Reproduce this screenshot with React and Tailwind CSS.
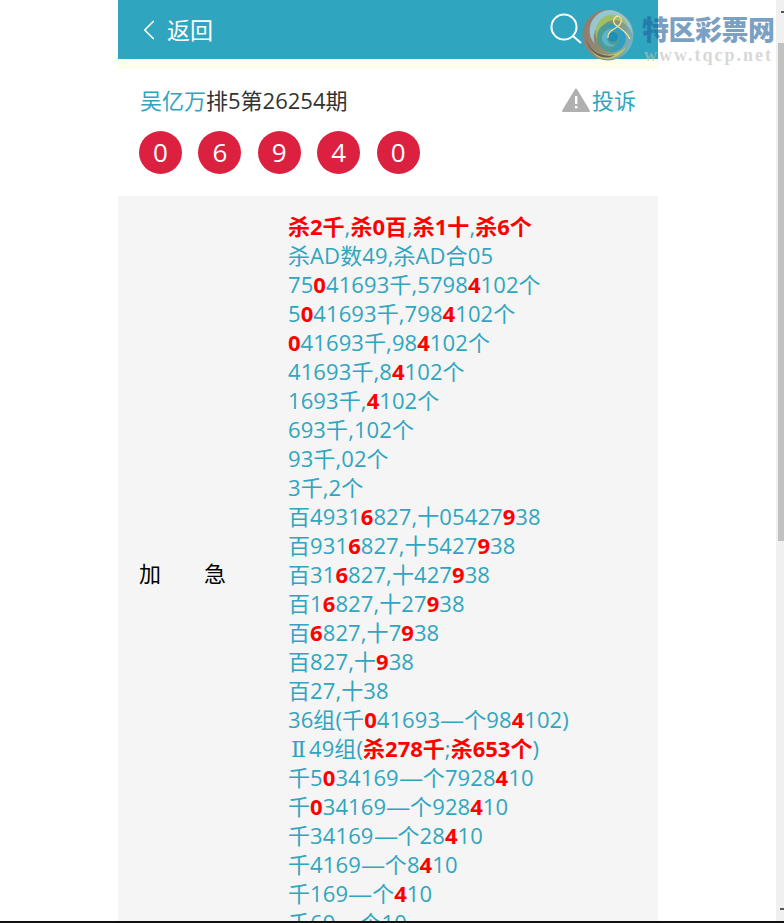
import { ChevronLeft } from 'lucide-react';

const R = ({ children }) => <b className="font-bold tracking-normal text-[#ff0000]">{children}</b>;
// The long dash in the reference runs a little wider than the font's own
const D = () => <span className="inline-block w-[24px] origin-left scale-x-[1.1]">—</span>;
const Two = () => <span className="inline-block w-[21px] text-center font-['DejaVu_Serif',serif]">Ⅱ</span>;

// Each row of the forecast text
const lines = [
  <><R>杀2千</R>,<R>杀0百</R>,<R>杀1十</R>,<R>杀6个</R></>,
  <>杀AD数49,杀AD合05</>,
  <>75<R>0</R>41693千,5798<R>4</R>102个</>,
  <>5<R>0</R>41693千,798<R>4</R>102个</>,
  <><R>0</R>41693千,98<R>4</R>102个</>,
  <>41693千,8<R>4</R>102个</>,
  <>1693千,<R>4</R>102个</>,
  <>693千,102个</>,
  <>93千,02个</>,
  <>3千,2个</>,
  <>百4931<R>6</R>827,十05427<R>9</R>38</>,
  <>百931<R>6</R>827,十5427<R>9</R>38</>,
  <>百31<R>6</R>827,十427<R>9</R>38</>,
  <>百1<R>6</R>827,十27<R>9</R>38</>,
  <>百<R>6</R>827,十7<R>9</R>38</>,
  <>百827,十<R>9</R>38</>,
  <>百27,十38</>,
  <>36组(千<R>0</R>41693<D />个98<R>4</R>102)</>,
  <><Two />49组(<R>杀278千</R>;<R>杀653个</R>)</>,
  <>千5<R>0</R>34169<D />个7928<R>4</R>10</>,
  <>千<R>0</R>34169<D />个928<R>4</R>10</>,
  <>千34169<D />个28<R>4</R>10</>,
  <>千4169<D />个8<R>4</R>10</>,
  <>千169<D />个<R>4</R>10</>,
  <>千69<D />个10</>,
];

const balls = ['0', '6', '9', '4', '0'];

function Logo() {
  return (
    <svg width="52" height="52" viewBox="0 0 52 52" className="block">
      <defs>
        <linearGradient id="logoBase" x1="0" y1="0.3" x2="1" y2="0.7">
          <stop offset="0" stopColor="#94796c" />
          <stop offset="0.55" stopColor="#8d8f72" />
          <stop offset="1" stopColor="#6fb7c8" />
        </linearGradient>
      </defs>
      <circle cx="26" cy="26" r="25.5" fill="url(#logoBase)" />
      <path d="M28 1C40 2 50 12 51 26C46 14 36 9 27 11C16 13 9 24 13 35C6 28 6 16 12 9C16 4 22 1 28 1Z" fill="#97c6d2" />
      <path d="M22 8C31 3 42 7 46 17C38 10 30 10 24 14C17 18 14 27 17 34C11 26 13 13 22 8Z" fill="#9dbf68" />
      <path d="M7 36C15 47 31 50 44 38C38 49 26 53 16 48C12 46 9 41 7 36Z" fill="#b9c96a" />
      <path d="M3 28C7 41 19 49 33 46C24 52 8 48 3 28Z" fill="#6b5a58" />
      <path d="M15 28C15 19 23 13 32 15C41 17 46 26 43 34C40 42 31 45 24 42C18 39 15 34 15 28Z" fill="#4f9c96" />
      <path d="M22 18C30 13 41 17 43 26C45 36 36 44 27 42C34 40 39 34 38 27C36 20 28 16 22 18Z" fill="#2b9fcb" />
      <path d="M20 31C19 24 25 19 32 20C27 21 24 25 25 30C26 35 30 37 34 35C29 40 22 37 20 31Z" fill="#5cb4c8" />
      <circle cx="31" cy="28" r="5" fill="#1c8fbb" />
      <path d="M36 7C41 9 40 15 35 18C30 21 25 24 26 29" fill="none" stroke="#f3dc8f" strokeWidth="1.3" />
      <path d="M36 7C31 8 30 14 35 17C40 20 45 24 48 30" fill="none" stroke="#f7e3a2" strokeWidth="1.3" />
    </svg>
  );
}

export default function App() {
  return (
    <div className="relative h-[923px] w-[784px] overflow-hidden bg-white font-['Open_Sans','Noto_Sans_CJK_SC',sans-serif]">
      <div className="ml-[118px] w-[540px]">
        {/* Header */}
        <header className="flex h-[59px] items-center justify-between bg-[#30a5bf] pl-[14px] pr-[76px] text-white">
          <div className="flex items-center gap-[1px]">
            <ChevronLeft size={34} strokeWidth={1.2} />
            <span className="mt-[2px] text-[23px] leading-none">返回</span>
          </div>
          <svg width="32" height="32" viewBox="0 0 32 32" fill="none" stroke="white" strokeWidth="2" className="-mt-[1px]">
            <circle cx="14" cy="14" r="12.5" />
            <path d="M23 23l8 7" />
          </svg>
        </header>
        <div className="h-[10px] bg-[#fffdec]" />

        {/* Title */}
        <section className="h-[127px] px-[22px] pt-[15px]">
          <div className="flex items-center justify-between text-[22px] leading-[32px] text-[#333333]">
            <div><span className="text-[#30a5bf]">吴亿万</span>排5第26254期</div>
            <div className="flex items-center gap-[2px] text-[#30a5bf]">
              <svg width="28" height="24" viewBox="0 0 28 24">
                <path d="M14 1.5L27 23H1Z" fill="#b0b0b0" stroke="#b0b0b0" strokeWidth="2" strokeLinejoin="round" />
                <rect x="13" y="8" width="2.4" height="8" fill="white" />
                <rect x="13" y="18" width="2.4" height="2.4" fill="white" />
              </svg>
              <span>投诉</span>
            </div>
          </div>
          <div className="-ml-px mt-[15px] flex gap-[16.4px]">
            {balls.map((n, i) => (
              <span key={i} className="flex h-[43px] w-[43px] items-center justify-center rounded-full bg-[#dc203f] text-[26px] text-white">
                {n}
              </span>
            ))}
          </div>
        </section>

        {/* Detail row */}
        <section className="flex items-center bg-[#f5f5f5] pb-[14px] pt-[16px]">
          <div className="-mt-[3px] flex w-[170px] gap-[43px] pl-[21px] text-[22px] leading-[29px] text-black">
            <span>加</span>
            <span>急</span>
          </div>
          <div className="text-[22px] leading-[29px] tracking-[0.1px] text-[#30a5bf]">
            {lines.map((line, i) => (
              <div key={i} className="h-[29px] whitespace-nowrap">{line}</div>
            ))}
          </div>
        </section>
      </div>

      {/* Logo watermark sits over the header */}
      <div className="absolute left-[582px] top-[9px]"><Logo /></div>
      <div className="absolute left-[642px] top-[15px] whitespace-nowrap text-[27px] font-black leading-[30px] tracking-[-0.5px] text-[#1f5f9a]/60">特区彩票网</div>
      <div className="absolute left-[644px] top-[46px] whitespace-nowrap font-['Liberation_Serif',serif] text-[18px] font-bold leading-[18px] tracking-[2px] text-[#bdbdbd]/60">www.tqcp.net</div>

      {/* Scrollbar */}
      <div className="absolute bottom-0 right-0 top-0 w-[8px] bg-[#f0f0f0]">
        <div className="ml-[2px] mt-[43px] h-[498px] w-[6px] bg-[#c1c1c1]" />
      </div>
      <div className="absolute right-0 top-[11px] h-[2px] w-[3px] bg-[#555555]" />
      <div className="absolute bottom-[13px] right-0 h-[2px] w-[4px] bg-[#555555]" />
      <div className="absolute inset-x-0 bottom-0 h-[2px] bg-[#111111]" />
    </div>
  );
}
